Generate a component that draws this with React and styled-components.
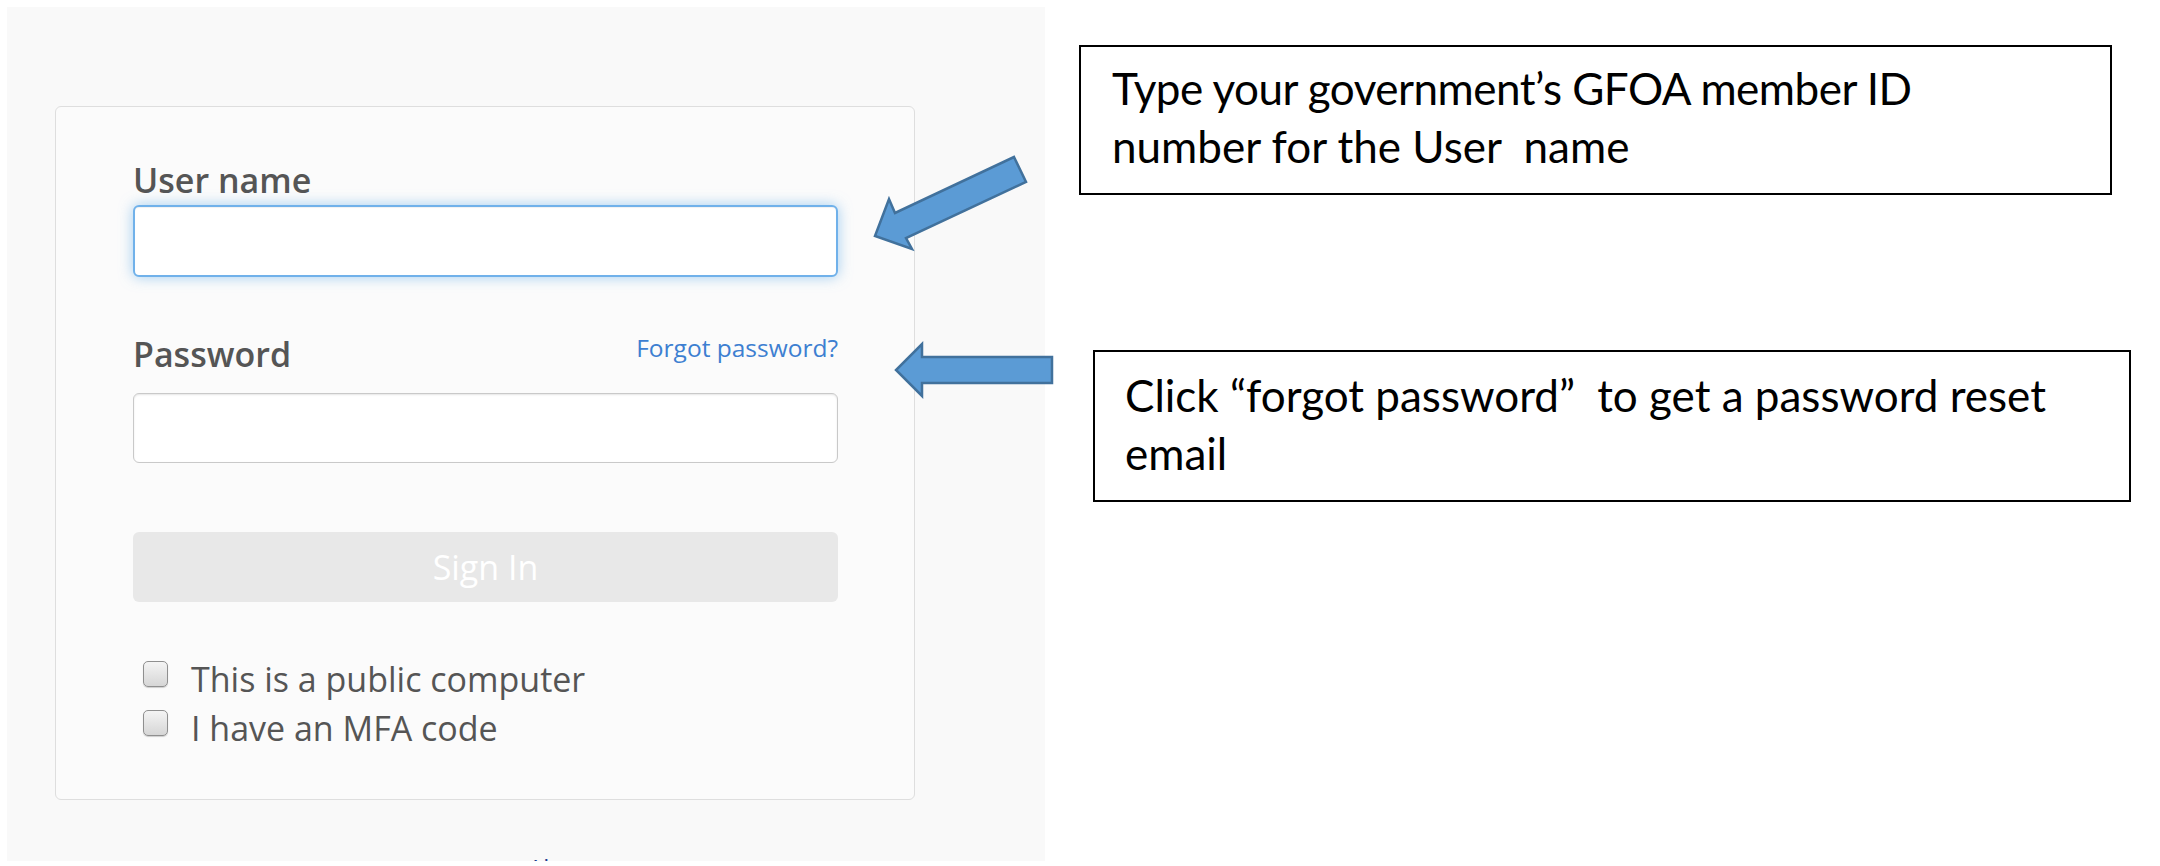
import React from 'react';
import styled, { createGlobalStyle } from 'styled-components';

const GlobalStyle = createGlobalStyle`
  html, body { margin: 0; padding: 0; background: #ffffff; }
  body {
    width: 2160px;
    height: 866px;
    overflow: hidden;
    font-family: "Open Sans", "Noto Sans", sans-serif;
  }
  *, *::before, *::after { box-sizing: border-box; }
`;

const Page = styled.div`
  position: relative;
  width: 2160px;
  height: 866px;
  display: flex;
  align-items: flex-start;
`;

const ScreenshotPanel = styled.section`
  flex-shrink: 0;
  margin: 7px 0 0 7px;
  width: 1038px;
  height: 854px;
  padding: 99px 0 0 48px;
  background: #f9f9f9;
  overflow: hidden;
`;

const Card = styled.div`
  width: 860px;
  height: 694px;
  padding: 53px 76px 0 77px;
  background: #fbfbfb;
  border: 1px solid #dedede;
  border-radius: 6px;
  display: flex;
  flex-direction: column;
`;

const FieldLabel = styled.label`
  display: block;
  font-size: 34px;
  line-height: 40px;
  font-weight: 600;
  color: #555555;
`;

const LabelRow = styled.div`
  display: flex;
  justify-content: space-between;
  align-items: flex-start;
  margin-top: ${(p) => p.$gap}px;
`;

const ForgotLink = styled.a`
  font-size: 24.5px;
  line-height: 28px;
  color: #3d7fd1;
  text-decoration: none;
`;

const TextInput = styled.input`
  display: block;
  width: 100%;
  height: ${(p) => p.$h}px;
  margin-top: ${(p) => p.$gap}px;
  padding: 0 16px;
  font-family: "Open Sans", sans-serif;
  font-size: 28px;
  background: #ffffff;
  border-radius: 6px;
  outline: none;
  border: ${(p) => (p.$focused ? '2px solid #70b1ea' : '1px solid #c9c9c9')};
  box-shadow: ${(p) =>
    p.$focused
      ? 'inset 0 1px 1px rgba(0,0,0,0.06), 0 0 14px rgba(102,175,233,0.6)'
      : 'inset 0 1px 2px rgba(0,0,0,0.1)'};
`;

const SignInButton = styled.button`
  display: block;
  width: 100%;
  height: 70px;
  margin-top: 69px;
  border: none;
  border-radius: 6px;
  background: #e8e8e8;
  color: #ffffff;
  font-family: "Open Sans", sans-serif;
  font-size: 34px;
  font-weight: 400;
  line-height: 70px;
  padding: 0;
`;

const CheckList = styled.div`
  margin-top: 53px;
  display: flex;
  flex-direction: column;
`;

const CheckItem = styled.label`
  display: flex;
  align-items: flex-start;
  height: 49px;
  font-size: 34px;
  line-height: 49px;
  color: #555555;
`;

const CheckBox = styled.input.attrs({ type: 'checkbox' })`
  appearance: none;
  -webkit-appearance: none;
  flex-shrink: 0;
  width: 25px;
  height: 26px;
  margin: 6px 23px 0 10px;
  border: 1px solid #8f8f8f;
  border-radius: 5px;
  background: linear-gradient(#f4f4f4, #d6d6d6);
  box-shadow: 0 1px 1px rgba(0,0,0,0.18);
`;

const FooterLink = styled.a`
  display: block;
  margin: 52px 0 0 473px;
  font-size: 24px;
  line-height: 32px;
  color: #1d3c8f;
  text-decoration: none;
`;

const AnnotationColumn = styled.div`
  display: flex;
  flex-direction: column;
  align-items: flex-start;
`;

const CalloutBox = styled.div`
  width: ${(p) => p.$w}px;
  height: ${(p) => p.$h}px;
  margin-top: ${(p) => p.$top}px;
  margin-left: ${(p) => p.$left}px;
  padding: ${(p) => p.$padTop}px 0 0 ${(p) => p.$padLeft}px;
  border: 2px solid #000000;
  background: #ffffff;
  font-family: Lato, "Noto Sans", sans-serif;
  font-size: 44px;
  line-height: 58px;
  color: #000000;
`;

const CalloutLine = styled.span`
  display: block;
  white-space: pre;
  letter-spacing: ${(p) => p.$tight || 0}px;
`;

const ArrowLayer = styled.svg`
  position: absolute;
  left: 0;
  top: 0;
  width: 2160px;
  height: 866px;
  pointer-events: none;
`;

function Arrows() {
  return (
    <ArrowLayer viewBox="0 0 2160 866">
      <polygon
        points="1014,157 1026,182 906,238 912,249 875,236 889,199 895,213"
        fill="#5b9bd5"
        stroke="#41719c"
        strokeWidth="2.5"
        strokeLinejoin="miter"
      />
      <polygon
        points="1052,357 1052,383 922,383 922,396 896,370 922,344 922,357"
        fill="#5b9bd5"
        stroke="#41719c"
        strokeWidth="2.5"
        strokeLinejoin="miter"
      />
    </ArrowLayer>
  );
}

export default function App() {
  return (
    <>
      <GlobalStyle />
      <Page>
        <ScreenshotPanel>
          <Card>
            <FieldLabel htmlFor="user">User name</FieldLabel>
            <TextInput id="user" $h={72} $gap={5} $focused />
            <LabelRow $gap={57}>
              <FieldLabel htmlFor="pass">Password</FieldLabel>
              <ForgotLink href="#">Forgot password?</ForgotLink>
            </LabelRow>
            <TextInput id="pass" type="password" $h={70} $gap={19} />
            <SignInButton type="button">Sign In</SignInButton>
            <CheckList>
              <CheckItem>
                <CheckBox />
                This is a public computer
              </CheckItem>
              <CheckItem>
                <CheckBox />
                I have an MFA code
              </CheckItem>
            </CheckList>
          </Card>
          <FooterLink href="#">About</FooterLink>
        </ScreenshotPanel>
        <AnnotationColumn>
          <CalloutBox $w={1033} $h={150} $top={45} $left={34} $padTop={12} $padLeft={31}>
            <CalloutLine $tight={-0.5}>Type your government’s GFOA member ID</CalloutLine>
            <CalloutLine>number for the User  name</CalloutLine>
          </CalloutBox>
          <CalloutBox $w={1038} $h={152} $top={155} $left={48} $padTop={14} $padLeft={30}>
            <CalloutLine>Click “forgot password”  to get a password reset</CalloutLine>
            <CalloutLine>email</CalloutLine>
          </CalloutBox>
        </AnnotationColumn>
        <Arrows />
      </Page>
    </>
  );
}
